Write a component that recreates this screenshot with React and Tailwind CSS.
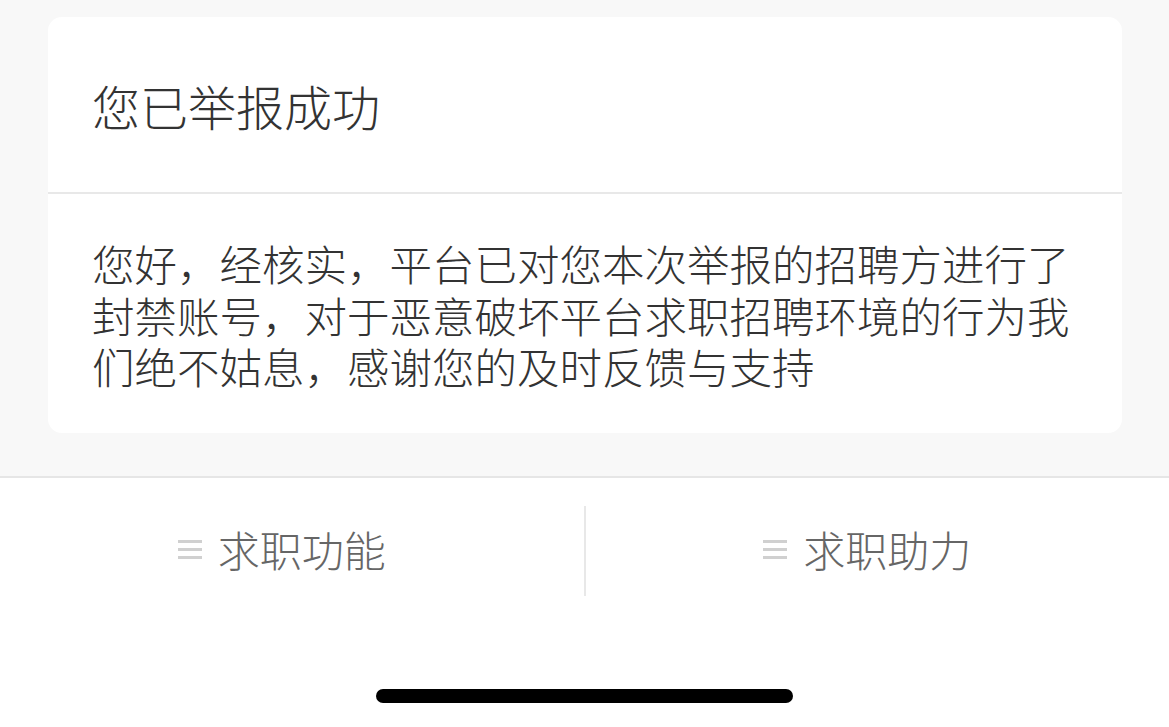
const font = {
  fontFamily:
    '"Noto Sans CJK SC", "Noto Sans", "Liberation Sans", sans-serif',
};

function MenuIcon() {
  return (
    <span className="flex w-[24px] flex-col gap-[5px]">
      <span className="h-[3px] w-full bg-[#d0d0d0]" />
      <span className="h-[3px] w-full bg-[#d0d0d0]" />
      <span className="h-[3px] w-full bg-[#d0d0d0]" />
    </span>
  );
}

function Tab({ label }) {
  return (
    <button
      type="button"
      className="flex flex-1 items-center justify-center gap-[16px] pr-[20px] pb-[4px]"
    >
      <MenuIcon />
      <span className="text-[42px] font-light leading-none text-[#666666]">
        {label}
      </span>
    </button>
  );
}

export default function App() {
  return (
    <div
      className="flex h-[727px] w-[1169px] flex-col overflow-hidden bg-white"
      style={font}
    >
      {/* top gray area with report card */}
      <div className="h-[478px] border-b-2 border-[#e6e6e6] bg-[#f8f8f8] px-[48px] pt-[17px]">
        <div className="w-[1074px] rounded-[14px] bg-white">
          <div className="flex h-[177px] items-center border-b-2 border-[#e8e8e8] px-[44px]">
            <h1 className="text-[48px] font-light leading-none text-[#333333]">
              您已举报成功
            </h1>
          </div>
          <div className="px-[44px] pt-[43px] pb-[41px]">
            <p className="text-[42.5px] font-light leading-[51.5px] text-[#333333]">
              您好，经核实，平台已对您本次举报的招聘方进行了封禁账号，对于恶意破坏平台求职招聘环境的行为我们绝不姑息，感谢您的及时反馈与支持
            </p>
          </div>
        </div>
      </div>

      {/* bottom tab bar */}
      <div className="flex pt-[28px]">
        <Tab label="求职功能" />
        <div className="h-[90px] w-[2px] bg-[#e8e8e8]" />
        <Tab label="求职助力" />
      </div>

      {/* home indicator */}
      <div className="flex flex-1 items-start justify-center pt-[93px]">
        <div className="h-[14px] w-[417px] rounded-full bg-black" />
      </div>
    </div>
  );
}
